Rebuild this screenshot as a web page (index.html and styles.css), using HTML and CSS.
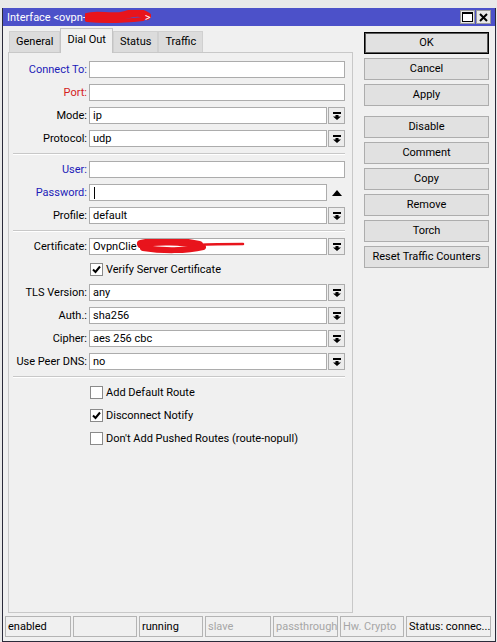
FILE: index.html
```html
<!DOCTYPE html>
<html>
<head>
<meta charset="utf-8">
<link rel="stylesheet" href="styles.css">
</head>
<body>
<div class="window">
  <div class="titlebar">
    <div class="title">Interface &lt;ovpn-<span class="redact-title"><svg width="66" height="14" viewBox="0 0 66 14"><path d="M2 7 C12 3 26 9 40 5 S56 3 62 6" stroke="#e8141c" stroke-width="8" fill="none" stroke-linecap="round"/><path d="M2 10 C20 12 40 11 58 9" stroke="#e8141c" stroke-width="4" fill="none" stroke-linecap="round"/></svg></span><span class="gt">&gt;</span></div>
    <div class="tbtns">
      <div class="tbtn"><svg width="11" height="10" viewBox="0 0 11 10"><rect x="0.5" y="0.5" width="10" height="9" fill="#fff" stroke="#000"/><rect x="0" y="0" width="11" height="2" fill="#000"/></svg></div>
      <div class="tbtn"><svg width="9" height="9" viewBox="0 0 9 9"><path d="M1 1 L8 8 M8 1 L1 8" stroke="#000" stroke-width="2"/></svg></div>
    </div>
  </div>
  <div class="main">
    <div class="leftcol">
      <div class="tabs">
        <div class="tab">General</div>
        <div class="tab tab-active">Dial Out</div>
        <div class="tab">Status</div>
        <div class="tab">Traffic</div>
      </div>
      <div class="panel">
        <div class="row"><div class="lbl blue">Connect To:</div><div class="field"></div></div>
        <div class="row"><div class="lbl red">Port:</div><div class="field"></div></div>
        <div class="row"><div class="lbl">Mode:</div><div class="field">ip</div><div class="dd"><svg width="8" height="8" viewBox="0 0 8 8"><rect x="0" y="0" width="8" height="2" fill="#000"/><path d="M2.5 3 H5.5 V4.5 H8 L4 8 L0 4.5 H2.5 Z" fill="#000"/></svg></div></div>
        <div class="row"><div class="lbl">Protocol:</div><div class="field">udp</div><div class="dd"><svg width="8" height="8" viewBox="0 0 8 8"><rect x="0" y="0" width="8" height="2" fill="#000"/><path d="M2.5 3 H5.5 V4.5 H8 L4 8 L0 4.5 H2.5 Z" fill="#000"/></svg></div></div>
        <div class="sep"></div>
        <div class="row"><div class="lbl blue">User:</div><div class="field"></div></div>
        <div class="row"><div class="lbl blue">Password:</div><div class="field"><span class="caret"></span></div><div class="up"><svg width="10" height="6" viewBox="0 0 10 6"><path d="M0 6 L5 0 L10 6 Z" fill="#000"/></svg></div></div>
        <div class="row"><div class="lbl">Profile:</div><div class="field">default</div><div class="dd"><svg width="8" height="8" viewBox="0 0 8 8"><rect x="0" y="0" width="8" height="2" fill="#000"/><path d="M2.5 3 H5.5 V4.5 H8 L4 8 L0 4.5 H2.5 Z" fill="#000"/></svg></div></div>
        <div class="sep"></div>
        <div class="row"><div class="lbl">Certificate:</div><div class="field field-cert">OvpnClie<svg class="redact-cert" width="160" height="17" viewBox="0 0 160 17"><path d="M54 6 C70 2 95 3 112 7" stroke="#e8141c" stroke-width="8" fill="none" stroke-linecap="round"/><path d="M56 10 C75 13 100 13 116 9" stroke="#e8141c" stroke-width="6" fill="none" stroke-linecap="round"/><path d="M110 7 C128 6 142 6 156 6" stroke="#e8141c" stroke-width="2.5" fill="none" stroke-linecap="round"/></svg></div><div class="dd"><svg width="8" height="8" viewBox="0 0 8 8"><rect x="0" y="0" width="8" height="2" fill="#000"/><path d="M2.5 3 H5.5 V4.5 H8 L4 8 L0 4.5 H2.5 Z" fill="#000"/></svg></div></div>
        <div class="row crow"><div class="cb"><svg width="11" height="11" viewBox="0 0 11 11"><path d="M2 5.5 L4.5 8 L9 2.5" stroke="#000" stroke-width="2" fill="none"/></svg></div><div class="ctext">Verify Server Certificate</div></div>
        <div class="row"><div class="lbl">TLS Version:</div><div class="field">any</div><div class="dd"><svg width="8" height="8" viewBox="0 0 8 8"><rect x="0" y="0" width="8" height="2" fill="#000"/><path d="M2.5 3 H5.5 V4.5 H8 L4 8 L0 4.5 H2.5 Z" fill="#000"/></svg></div></div>
        <div class="row"><div class="lbl">Auth.:</div><div class="field">sha256</div><div class="dd"><svg width="8" height="8" viewBox="0 0 8 8"><rect x="0" y="0" width="8" height="2" fill="#000"/><path d="M2.5 3 H5.5 V4.5 H8 L4 8 L0 4.5 H2.5 Z" fill="#000"/></svg></div></div>
        <div class="row"><div class="lbl">Cipher:</div><div class="field">aes 256 cbc</div><div class="dd"><svg width="8" height="8" viewBox="0 0 8 8"><rect x="0" y="0" width="8" height="2" fill="#000"/><path d="M2.5 3 H5.5 V4.5 H8 L4 8 L0 4.5 H2.5 Z" fill="#000"/></svg></div></div>
        <div class="row"><div class="lbl">Use Peer DNS:</div><div class="field">no</div><div class="dd"><svg width="8" height="8" viewBox="0 0 8 8"><rect x="0" y="0" width="8" height="2" fill="#000"/><path d="M2.5 3 H5.5 V4.5 H8 L4 8 L0 4.5 H2.5 Z" fill="#000"/></svg></div></div>
        <div class="sep"></div>
        <div class="row crow"><div class="cb"></div><div class="ctext">Add Default Route</div></div>
        <div class="row crow"><div class="cb"><svg width="11" height="11" viewBox="0 0 11 11"><path d="M2 5.5 L4.5 8 L9 2.5" stroke="#000" stroke-width="2" fill="none"/></svg></div><div class="ctext">Disconnect Notify</div></div>
        <div class="row crow"><div class="cb"></div><div class="ctext">Don't Add Pushed Routes (route-nopull)</div></div>
      </div>
    </div>
    <div class="rightcol">
      <div class="btn btn-default">OK</div>
      <div class="btn">Cancel</div>
      <div class="btn">Apply</div>
      <div class="btn btn-gap">Disable</div>
      <div class="btn">Comment</div>
      <div class="btn">Copy</div>
      <div class="btn">Remove</div>
      <div class="btn">Torch</div>
      <div class="btn">Reset Traffic Counters</div>
    </div>
  </div>
  <div class="statusbar">
    <div class="cell w66">enabled</div>
    <div class="cell w64"></div>
    <div class="cell w64">running</div>
    <div class="cell w66 dim">slave</div>
    <div class="cell w65 dim">passthrough</div>
    <div class="cell w64 dim">Hw. Crypto</div>
    <div class="cell w85">Status: connec...</div>
  </div>
</div>
</body>
</html>
```
FILE: styles.css
```css
html, body {
  margin: 0;
  padding: 0;
}
body {
  width: 497px;
  height: 642px;
  overflow: hidden;
  background: #e9e9e9;
  font-family: Roboto, "Liberation Sans", Arial, sans-serif;
  font-size: 11px;
  color: #000;
}
.window {
  margin: 8px 1px 0 2px;
  height: 634px;
  box-sizing: border-box;
  border-left: 1px solid #2a2a3a;
  border-right: 1px solid #2a2a3a;
  border-bottom: 1px solid #2a2a3a;
  background: #f0f0f0;
}
.titlebar {
  height: 18px;
  background: #4c51c9;
  display: flex;
  align-items: center;
  justify-content: space-between;
  padding: 0 4px;
}
.title {
  color: #fff;
  display: flex;
  align-items: center;
  white-space: nowrap;
}
.redact-title {
  display: inline-flex;
  margin-left: -1px;
}
.gt {
  margin-left: -6px;
}
.tbtns {
  display: flex;
  gap: 1px;
}
.tbtn {
  width: 13px;
  height: 12px;
  background: #e8e8e8;
  border: 1px solid #9a9a9a;
  display: flex;
  align-items: center;
  justify-content: center;
}
.main {
  display: flex;
  padding-top: 2px;
}
.leftcol {
  margin-left: 5px;
  width: 345px;
}
.tabs {
  display: flex;
  height: 24px;
  align-items: flex-end;
  padding-left: 1px;
  position: relative;
  z-index: 1;
}
.tab {
  height: 21px;
  box-sizing: border-box;
  padding: 0 6px;
  line-height: 20px;
  background: #dcdcdc;
  border: 1px solid #d0d0d0;
  border-bottom: none;
}
.tab-active {
  height: 25px;
  margin-bottom: -1px;
  background: #f0f0f0;
  border-color: #c4c4c4;
  line-height: 22px;
  padding: 0 6px;
}
.panel {
  height: 561px;
  box-sizing: border-box;
  border: 1px solid #c8c8c8;
  padding: 8px 7px 0 0;
}
.row {
  display: flex;
  align-items: center;
  height: 17px;
  margin-bottom: 6px;
}
.lbl {
  width: 78px;
  margin-right: 2px;
  text-align: right;
  white-space: nowrap;
}
.blue { color: #1c1cb8; }
.red { color: #d42020; }
.field {
  flex: 1;
  height: 17px;
  box-sizing: border-box;
  border: 1px solid #acacac;
  background: #fff;
  padding-left: 3px;
  line-height: 15px;
  white-space: nowrap;
  overflow: hidden;
}
.field-cert {
  position: relative;
}
.redact-cert {
  position: absolute;
  left: -3px;
  top: -1px;
}
.caret {
  display: inline-block;
  width: 1px;
  height: 12px;
  background: #000;
  vertical-align: middle;
  margin-left: 1px;
}
.dd {
  width: 17px;
  height: 17px;
  box-sizing: border-box;
  margin-left: 1px;
  border: 1px solid #acacac;
  background: #ececec;
  display: flex;
  align-items: center;
  justify-content: center;
}
.up {
  width: 17px;
  height: 17px;
  margin-left: 1px;
  display: flex;
  align-items: center;
  justify-content: center;
}
.sep {
  margin: 0 0 6px 4px;
  border-top: 1px solid #c8c8c8;
  border-bottom: 1px solid #fff;
}
.crow {
  padding-left: 81px;
}
.cb {
  width: 13px;
  height: 13px;
  box-sizing: border-box;
  border: 1px solid #8a8a8a;
  background: #fff;
  display: flex;
  align-items: center;
  justify-content: center;
}
.ctext {
  margin-left: 3px;
  white-space: nowrap;
}
.rightcol {
  margin-left: 11px;
  width: 125px;
  padding-top: 4px;
}
.btn {
  height: 22px;
  box-sizing: border-box;
  border: 1px solid #adadad;
  background: #e1e1e1;
  text-align: center;
  line-height: 20px;
  margin-bottom: 4px;
  white-space: nowrap;
}
.btn-default {
  border: 1px solid #000;
  box-shadow: inset 0 0 0 1px #5a5a5a;
}
.btn-gap {
  margin-top: 10px;
}
.statusbar {
  display: flex;
  gap: 2px;
  margin-top: 3px;
  padding-left: 2px;
}
.cell {
  height: 21px;
  box-sizing: border-box;
  border: 1px solid #b4b4b4;
  padding-left: 2px;
  line-height: 19px;
  white-space: nowrap;
  overflow: hidden;
}
.dim { color: #a6a6a6; }
.w66 { width: 66px; }
.w64 { width: 64px; }
.w65 { width: 65px; }
.w85 { width: 85px; }
```
